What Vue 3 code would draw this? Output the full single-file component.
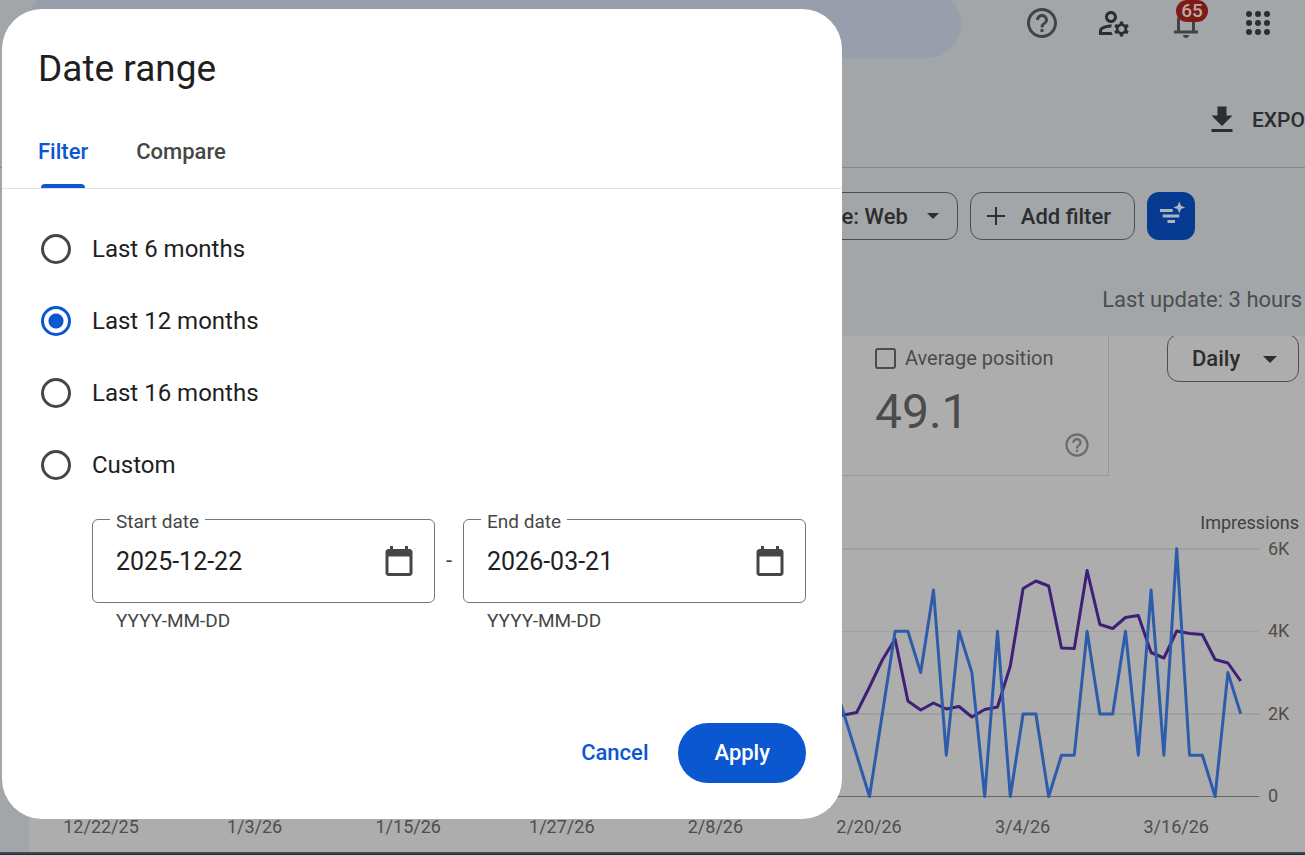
<script setup>
import { ref } from 'vue'

const tab = ref('Filter')
const range = ref('Last 12 months')
const ranges = ['Last 6 months', 'Last 12 months', 'Last 16 months', 'Custom']
const dates = ref([
  { id: 'start', label: 'Start date', value: '2025-12-22' },
  { id: 'end', label: 'End date', value: '2026-03-21' },
])

const helpPath =
  'M11 18h2v-2h-2v2zm1-16C6.48 2 2 6.48 2 12s4.48 10 10 10 10-4.48 10-10S17.52 2 12 2zm0 18c-4.41 0-8-3.59-8-8s3.59-8 8-8 8 3.59 8 8-3.59 8-8 8zm0-14c-2.21 0-4 1.79-4 4h2c0-1.1.9-2 2-2s2 .9 2 2c0 2-3 1.75-3 5h2c0-2.25 3-2.5 3-5 0-2.21-1.79-4-4-4z'

// Daily series; the first value belongs to day 57 of the period
const firstDay = 57
const dayX = (i) => 101.5 + (firstDay + i) * 12.8
const clicks = [3, 2, 1, 0, 2, 4, 4, 3, 5, 1, 4, 3, 0, 4, 0, 2, 2, 0, 1, 1, 4, 2, 2, 4, 1, 5, 1, 6, 1, 1, 0, 3, 2]
const impressions = [
  716, 715, 712.5, 687, 660, 639, 701, 710, 703, 709, 706.5, 717, 709.5, 707, 666, 588.5, 581, 586, 648,
  648.5, 570.5, 624.5, 628.5, 617.5, 615.5, 652.5, 658, 631, 633.5, 634.5, 659.5, 663, 681,
]
const clickPoints = clicks.map((v, i) => `${dayX(i)},${796.5 - v * 41.3}`).join(' ')
const impressionPoints = impressions.map((y, i) => `${dayX(i)},${y}`).join(' ')
const xLabels = ['12/22/25', '1/3/26', '1/15/26', '1/27/26', '2/8/26', '2/20/26', '3/4/26', '3/16/26']
const yLabels = [
  { text: '6K', y: 549 },
  { text: '4K', y: 631 },
  { text: '2K', y: 714 },
  { text: '0', y: 796 },
]
</script>

<template>
  <div class="page">
    <header class="header">
      <div class="search"></div>
      <nav class="tools" aria-label="Account tools">
        <button class="tool soft" aria-label="Help">
          <svg viewBox="0 0 24 24"><path :d="helpPath" /></svg>
        </button>
        <button class="tool" aria-label="User settings">
          <svg viewBox="0 0 24 24">
            <path d="M4 18v-.65c0-.34.16-.66.41-.81C6.1 15.53 8.03 15 10 15c.03 0 .05 0 .08.01.1-.7.3-1.37.59-1.98-.22-.02-.44-.03-.67-.03-2.42 0-4.68.67-6.61 1.82-.88.52-1.39 1.5-1.39 2.53V20h9.26c-.42-.6-.75-1.28-.97-2H4zM10 12c2.21 0 4-1.79 4-4s-1.79-4-4-4-4 1.79-4 4 1.79 4 4 4zm0-6c1.1 0 2 .9 2 2s-.9 2-2 2-2-.9-2-2 .9-2 2-2zM20.75 16c0-.22-.03-.42-.06-.63l1.14-1.01-1-1.73-1.45.49c-.32-.27-.68-.48-1.08-.63L18 11h-2l-.3 1.49c-.4.15-.76.36-1.08.63l-1.45-.49-1 1.73 1.14 1.01c-.03.21-.06.41-.06.63s.03.42.06.63l-1.14 1.01 1 1.73 1.45-.49c.32.27.68.48 1.08.63L16 21h2l.3-1.49c.4-.15.76-.36 1.08-.63l1.45.49 1-1.73-1.14-1.01c.03-.21.06-.41.06-.63zM17 18c-1.1 0-2-.9-2-2s.9-2 2-2 2 .9 2 2-.9 2-2 2z" />
          </svg>
        </button>
        <button class="tool soft" aria-label="Notifications">
          <svg viewBox="0 0 24 24">
            <path d="M4 19v-2h2v-7q0-2.08 1.25-3.69T10.5 4.2v-.7q0-.62.44-1.06T12 2t1.06.44.44 1.06v.7q2 .5 3.25 2.11T18 10v7h2v2H4Zm8 3q-.82 0-1.41-.59T10 20h4q0 .83-.59 1.41T12 22Zm-4-5h8v-7q0-1.65-1.17-2.82T12 6 9.18 7.18 8 10v7Z" />
          </svg>
          <span class="badge">65</span>
        </button>
        <button class="tool" aria-label="Apps">
          <svg viewBox="0 0 24 24">
            <template v-for="r in 3" :key="r">
              <circle v-for="c in 3" :key="c" :cx="c * 6" :cy="r * 6" r="2" />
            </template>
          </svg>
        </button>
      </nav>
    </header>

    <div class="actions">
      <button class="export">
        <svg viewBox="0 0 24 24"><path d="M19 9h-4V3H9v6H5l7 7 7-7zM5 18v2h14v-2H5z" /></svg>
        <span>EXPO</span>
      </button>
    </div>

    <div class="filters">
      <button class="chip type">
        <span>Search type: Web</span>
        <svg class="arrow" viewBox="0 0 14 7"><path d="M0 0h14L7 7z" /></svg>
      </button>
      <button class="chip add">
        <svg class="plus" viewBox="0 0 18 18"><path d="M8 0h2v8h8v2h-8v8H8v-8H0V8h8z" /></svg>
        <span>Add filter</span>
      </button>
      <button class="smart" aria-label="Smart filter">
        <svg viewBox="0 0 48 48">
          <path d="M13 17h12.7v3H13zM15.7 22.5h16.6v3H15.7zM20.5 28h7.5v3h-7.5zM32.3 9.5l1.7 4.2 4.2 1.7-4.2 1.7-1.7 4.2-1.7-4.2-4.2-1.7 4.2-1.7z" />
        </svg>
      </button>
    </div>

    <p class="updated">Last update: 3 hours</p>

    <main class="report">
      <div class="summary">
        <section class="metric">
          <label class="metric-label"><input type="checkbox" />Average position</label>
          <strong>49.1</strong>
          <svg class="metric-help" viewBox="0 0 24 24"><path :d="helpPath" /></svg>
        </section>
        <div class="interval">
          <select aria-label="Interval">
            <option>Daily</option>
          </select>
          <svg class="arrow" viewBox="0 0 14 7"><path d="M0 0h14L7 7z" /></svg>
        </div>
      </div>
      <svg class="chart" viewBox="29 476 1276 376" role="img" aria-label="Clicks and impressions by day">
        <text x="1299" y="529" text-anchor="end" class="strong">Impressions</text>
        <path d="M60 549H1259M60 714H1259" stroke="#a0a0a0" stroke-width="2" />
        <path d="M60 631.5H1259" stroke="#a0a0a0" />
        <path d="M60 796.5H1259" stroke="#646464" />
        <polyline :points="impressionPoints" stroke="#3e2078" />
        <polyline :points="clickPoints" stroke="#2d5cab" />
        <text v-for="l in yLabels" :key="l.text" x="1268" :y="l.y + 6">{{ l.text }}</text>
        <text v-for="(l, i) in xLabels" :key="l" :x="101 + i * 153.6" y="833" text-anchor="middle">{{ l }}</text>
      </svg>
    </main>
    <div class="taskbar"></div>

    <form class="dialog" role="dialog" aria-labelledby="title" @submit.prevent>
      <h1 id="title">Date range</h1>
      <div class="tabs" role="tablist">
        <button
          v-for="t in ['Filter', 'Compare']"
          :key="t"
          type="button"
          role="tab"
          :aria-selected="tab === t"
          :class="['tab', { active: tab === t }]"
          @click="tab = t"
        >
          {{ t }}
        </button>
      </div>
      <div class="body">
        <label v-for="r in ranges" :key="r" class="option">
          <input v-model="range" type="radio" name="range" :value="r" />
          <span>{{ r }}</span>
        </label>
        <div class="dates">
          <template v-for="(d, i) in dates" :key="d.id">
            <span v-if="i" class="dash">-</span>
            <div class="field">
              <div class="box">
                <label :for="d.id">{{ d.label }}</label>
                <input :id="d.id" v-model="d.value" type="text" />
                <button type="button" class="calendar" :aria-label="'Pick ' + d.label">
                  <svg viewBox="0 0 24 24">
                    <path d="M19 4h-1V2h-2v2H8V2H6v2H5c-1.11 0-1.99.9-1.99 2L3 20c0 1.1.89 2 2 2h14c1.1 0 2-.9 2-2V6c0-1.1-.9-2-2-2zm0 16H5V9h14v11z" />
                  </svg>
                </button>
              </div>
              <span class="hint">YYYY-MM-DD</span>
            </div>
          </template>
        </div>
      </div>
      <div class="buttons">
        <button type="button" class="cancel">Cancel</button>
        <button type="submit" class="apply">Apply</button>
      </div>
    </form>
  </div>
</template>

<style>
body {
  margin: 0;
  overflow: hidden;
}
</style>

<style scoped>
.page {
  position: relative;
  overflow: hidden;
  min-height: 100vh;
  background: #a2a6a9;
  color: #2c2d2e;
  font-family: Roboto, "Liberation Sans", sans-serif;
}
* {
  box-sizing: border-box;
}
button,
input,
select {
  font: inherit;
  color: inherit;
  margin: 0;
  padding: 0;
  border: 0;
  background: none;
}
svg {
  display: block;
  fill: currentColor;
}
.header {
  display: flex;
  align-items: flex-start;
  justify-content: space-between;
  padding: 0 29px 14px 28px;
}
.search {
  flex: 1;
  max-width: 933px;
  height: 68px;
  margin-top: -10px;
  border-radius: 34px;
  background: #989eab;
}
.tools {
  display: flex;
  gap: 36px;
  padding-top: 5px;
}
.tool {
  position: relative;
  width: 36px;
  height: 36px;
}
.soft {
  color: #414345;
}
.badge {
  position: absolute;
  left: 8px;
  top: -5px;
  width: 32px;
  height: 22px;
  border-radius: 11px;
  background: #7f1b16;
  color: #b9aaa9;
  font-size: 19px;
  font-weight: 500;
  line-height: 22px;
  text-align: center;
}
.actions {
  display: flex;
  align-items: center;
  justify-content: flex-end;
  height: 96px;
  border-bottom: 1px solid #85888a;
}
.export {
  display: flex;
  align-items: center;
  gap: 12px;
  font-size: 21px;
  font-weight: 500;
}
.export svg {
  width: 36px;
  height: 36px;
}
.filters {
  display: flex;
  justify-content: flex-end;
  gap: 12px;
  padding: 24px 110px 0 0;
}
.chip {
  display: flex;
  align-items: center;
  height: 48px;
  border: 1px solid #4b4e50;
  border-radius: 12px;
  font-size: 22px;
  font-weight: 500;
}
.type {
  gap: 19px;
  padding: 0 18px 0 23px;
}
.add {
  gap: 16px;
  padding: 0 23px 0 16px;
}
.arrow {
  width: 14px;
  height: 7px;
}
.type .arrow {
  width: 12px;
  height: 6px;
}
.plus {
  width: 18px;
  height: 18px;
}
.smart {
  width: 48px;
  height: 48px;
  border-radius: 12px;
  background: #073b92;
  color: #aeb4bd;
}
.updated {
  margin: 0;
  padding: 46px 3px 22px;
  font-size: 22px;
  line-height: 28px;
  text-align: right;
  color: #4b4d4f;
}
.report {
  margin-left: 29px;
  background: #adadad;
  overflow: hidden;
}
.summary {
  display: flex;
  justify-content: flex-end;
  align-items: flex-start;
  gap: 58px;
  padding-right: 6px;
}
.metric {
  position: relative;
  width: 270px;
  height: 140px;
  padding: 8px 0 0 36px;
  border-right: 1px solid #979797;
  border-bottom: 1px solid #979797;
  color: #4b4b4b;
}
.metric-label {
  display: flex;
  align-items: center;
  gap: 9px;
  font-size: 20px;
  line-height: 28px;
}
.metric-label input {
  appearance: none;
  width: 21px;
  height: 21px;
  border: 2px solid #4b4b4b;
  border-radius: 3px;
}
.metric strong {
  display: block;
  font-size: 48px;
  font-weight: 400;
  line-height: 80px;
}
.metric-help {
  position: absolute;
  right: 17px;
  bottom: 16px;
  width: 28px;
  height: 28px;
  color: #6d6d6d;
}
.interval {
  position: relative;
  width: 132px;
  margin-top: -2px;
}
.interval select {
  appearance: none;
  display: block;
  width: 100%;
  height: 48px;
  padding-left: 24px;
  border: 1px solid #4d4d4d;
  border-radius: 12px;
  font-size: 22px;
  font-weight: 500;
}
.interval .arrow {
  position: absolute;
  right: 22px;
  top: 22px;
  pointer-events: none;
}
.chart {
  width: 100%;
  font-size: 18px;
  fill: #4e4e4e;
}
.chart .strong {
  fill: #404040;
}
.chart polyline {
  fill: none;
  stroke-width: 3;
  stroke-linejoin: round;
}
.taskbar {
  height: 3px;
  background: #17303b;
  border-top: 2px solid #3b484f;
}
.dialog {
  position: absolute;
  left: 2px;
  top: 9px;
  width: 840px;
  max-width: calc(100% - 4px);
  border-radius: 40px;
  background: #fff;
  color: #1f1f1f;
}
h1 {
  margin: 0;
  padding: 36px 36px 0;
  font-size: 37px;
  font-weight: 400;
  line-height: 48px;
}
.tabs {
  display: flex;
  gap: 48px;
  margin-top: 23px;
  padding: 0 36px;
  border-bottom: 1px solid #e0e2e2;
}
.tab {
  position: relative;
  height: 72px;
  padding-bottom: 2px;
  font-size: 22px;
  font-weight: 500;
  color: #444746;
}
.active {
  color: #0b57d0;
}
.active::after {
  content: "";
  position: absolute;
  left: 3px;
  right: 3px;
  bottom: 0;
  height: 4px;
  border-radius: 4px 4px 0 0;
  background: #0b57d0;
}
.body {
  padding: 24px 36px 0;
}
.option {
  display: flex;
  align-items: center;
  gap: 21px;
  height: 72px;
  padding-left: 3px;
  font-size: 24px;
}
.option input {
  appearance: none;
  width: 30px;
  height: 30px;
  border: 3px solid #444746;
  border-radius: 50%;
}
.option input:checked {
  border-color: #0b57d0;
  background: radial-gradient(circle, #0b57d0 7px, transparent 8px);
}
.dates {
  display: flex;
  padding: 18px 0 0 54px;
}
.dash {
  width: 28px;
  text-align: center;
  font-size: 22px;
  line-height: 84px;
  color: #444746;
}
.field {
  flex: 1;
  min-width: 0;
}
.box {
  position: relative;
  display: flex;
  align-items: center;
  height: 84px;
  padding: 0 17px 0 23px;
  border: 1px solid #747775;
  border-radius: 6px;
}
.box label {
  position: absolute;
  left: 17px;
  top: -10px;
  padding: 0 6px;
  background: #fff;
  font-size: 19px;
  line-height: 24px;
  color: #444746;
}
.box input {
  flex: 1;
  min-width: 0;
  font-size: 25px;
}
.calendar {
  width: 36px;
  height: 36px;
  color: #444746;
}
.hint {
  display: block;
  padding: 6px 24px 0;
  font-size: 19px;
  line-height: 24px;
  color: #444746;
}
.buttons {
  display: flex;
  justify-content: flex-end;
  gap: 30px;
  padding: 90px 36px 36px;
  font-size: 22px;
  font-weight: 500;
}
.cancel {
  padding-bottom: 2px;
  color: #0b57d0;
}
.apply {
  height: 60px;
  padding: 0 36px 2px;
  border-radius: 30px;
  background: #0b57d0;
  color: #fff;
}
</style>
